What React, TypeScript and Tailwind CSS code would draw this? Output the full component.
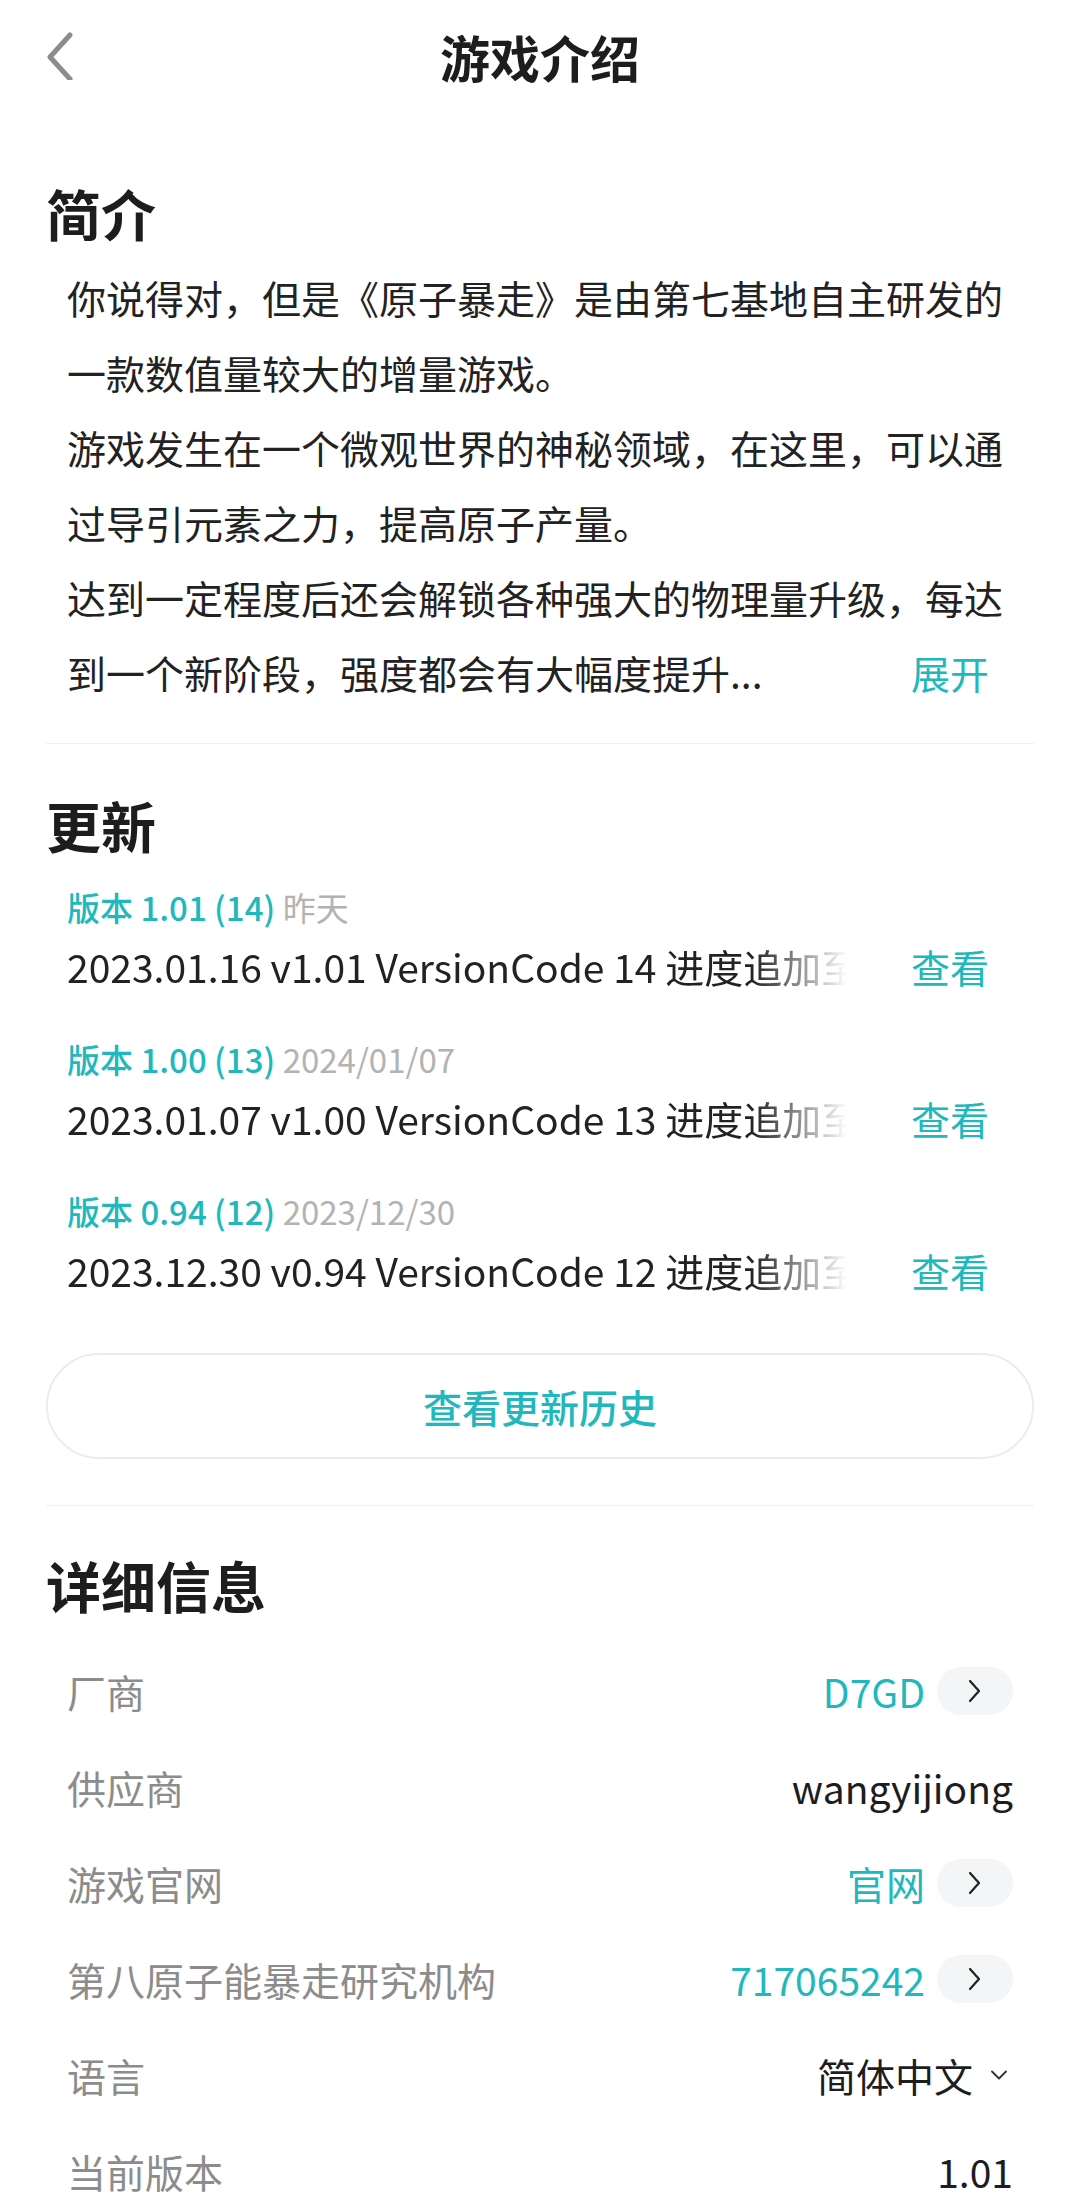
import { ChevronDown } from "lucide-react";

const font = { fontFamily: '"Noto Sans CJK SC", "Noto Sans", sans-serif' };

const intro = [
    "你说得对，但是《原子暴走》是由第七基地自主研发的",
    "一款数值量较大的增量游戏。",
    "游戏发生在一个微观世界的神秘领域，在这里，可以通",
    "过导引元素之力，提高原子产量。",
    "达到一定程度后还会解锁各种强大的物理量升级，每达",
];

const versions = [
    { name: "版本 1.01 (14)", date: "昨天", desc: "2023.01.16 v1.01 VersionCode 14 进度追加至" },
    { name: "版本 1.00 (13)", date: "2024/01/07", desc: "2023.01.07 v1.00 VersionCode 13 进度追加至" },
    { name: "版本 0.94 (12)", date: "2023/12/30", desc: "2023.12.30 v0.94 VersionCode 12 进度追加至" },
];

function Heading({ children }: { children: React.ReactNode }) {
    return <h2 className="text-[55px] leading-[72px] font-bold text-[#1d1d1f]">{children}</h2>;
}

function LinkPill() {
    return (
        <span className="ml-[12px] flex h-[48px] w-[76px] items-center justify-center rounded-full bg-[#f3f5f7]">
            <svg width="14" height="24" viewBox="0 0 14 24" fill="none">
                <path d="M2 2l9 10-9 10" stroke="#222" strokeWidth="2.2" strokeLinecap="round" strokeLinejoin="round" />
            </svg>
        </span>
    );
}

function InfoRow({ label, children }: { label: string; children: React.ReactNode }) {
    return (
        <div className="flex h-[96px] items-center justify-between pl-[21px] pr-[21px]">
            <span className="text-[39px] text-[#8c8c8c]">{label}</span>
            <div className="flex items-center">{children}</div>
        </div>
    );
}

export default function App() {
    return (
        <div className="min-h-[2207px] w-[1080px] bg-white" style={font}>
            <header className="relative flex h-[112px] items-center justify-center">
                <svg className="absolute left-[44px] top-[30px]" width="32" height="50" viewBox="0 0 32 50" fill="none">
                    <path d="M26 5L6 27l20 22" stroke="#8a8c90" strokeWidth="5" strokeLinecap="round" strokeLinejoin="round" />
                </svg>
                <h1 className="text-[50px] font-bold text-[#1d1d1f]">游戏介绍</h1>
            </header>

            <main className="px-[46px]">
                <section className="mt-[64px]">
                    <Heading>简介</Heading>
                    <div className="mt-[12px] pl-[21px] pr-[45px] text-[39px] leading-[75px] text-[#222]">
                        {intro.map((line) => (
                            <p key={line} className="whitespace-nowrap">{line}</p>
                        ))}
                        <div className="flex items-center justify-between">
                            <p className="whitespace-nowrap">到一个新阶段，强度都会有大幅度提升...</p>
                            <span className="text-[#21b8bd]">展开</span>
                        </div>
                    </div>
                </section>

                <div className="mt-[33px] h-px bg-[#f0f0f0]" />

                <section className="mt-[44px]">
                    <Heading>更新</Heading>
                    <div className="mt-[22px] flex flex-col gap-[38px] pl-[21px] pr-[45px]">
                        {versions.map((v) => (
                            <div key={v.name}>
                                <div className="h-[50px] text-[33px] leading-[50px]">
                                    <span className="font-medium text-[#21b8bd]">{v.name}</span>{" "}
                                    <span className="text-[#b3b3b3]">{v.date}</span>
                                </div>
                                <div className="mt-[4px] flex h-[60px] items-center justify-between">
                                    <div className="w-[780px] overflow-hidden whitespace-nowrap text-[39px] text-[#222] [mask-image:linear-gradient(to_right,black_88%,transparent)]">
                                        {v.desc}
                                    </div>
                                    <span className="text-[39px] text-[#21b8bd]">查看</span>
                                </div>
                            </div>
                        ))}
                    </div>
                    <button className="mt-[53px] flex h-[106px] w-full items-center justify-center rounded-full border-2 border-[#ececec] text-[39px] font-medium text-[#21b8bd]">
                        查看更新历史
                    </button>
                </section>

                <div className="mt-[46px] h-px bg-[#f0f0f0]" />

                <section className="mt-[42px]">
                    <Heading>详细信息</Heading>
                    <div className="mt-[23px]">
                        <InfoRow label="厂商">
                            <span className="text-[39px] text-[#21b8bd]">D7GD</span>
                            <LinkPill />
                        </InfoRow>
                        <InfoRow label="供应商">
                            <span className="text-[39px] text-[#1d1d1f]">wangyijiong</span>
                        </InfoRow>
                        <InfoRow label="游戏官网">
                            <span className="text-[39px] text-[#21b8bd]">官网</span>
                            <LinkPill />
                        </InfoRow>
                        <InfoRow label="第八原子能暴走研究机构">
                            <span className="text-[39px] text-[#21b8bd]">717065242</span>
                            <LinkPill />
                        </InfoRow>
                        <InfoRow label="语言">
                            <span className="text-[39px] text-[#1d1d1f]">简体中文</span>
                            <ChevronDown className="ml-[12px] h-[28px] w-[28px] text-[#333]" strokeWidth={1.6} />
                        </InfoRow>
                        <InfoRow label="当前版本">
                            <span className="text-[39px] text-[#1d1d1f]">1.01</span>
                        </InfoRow>
                    </div>
                </section>
            </main>
        </div>
    );
}
